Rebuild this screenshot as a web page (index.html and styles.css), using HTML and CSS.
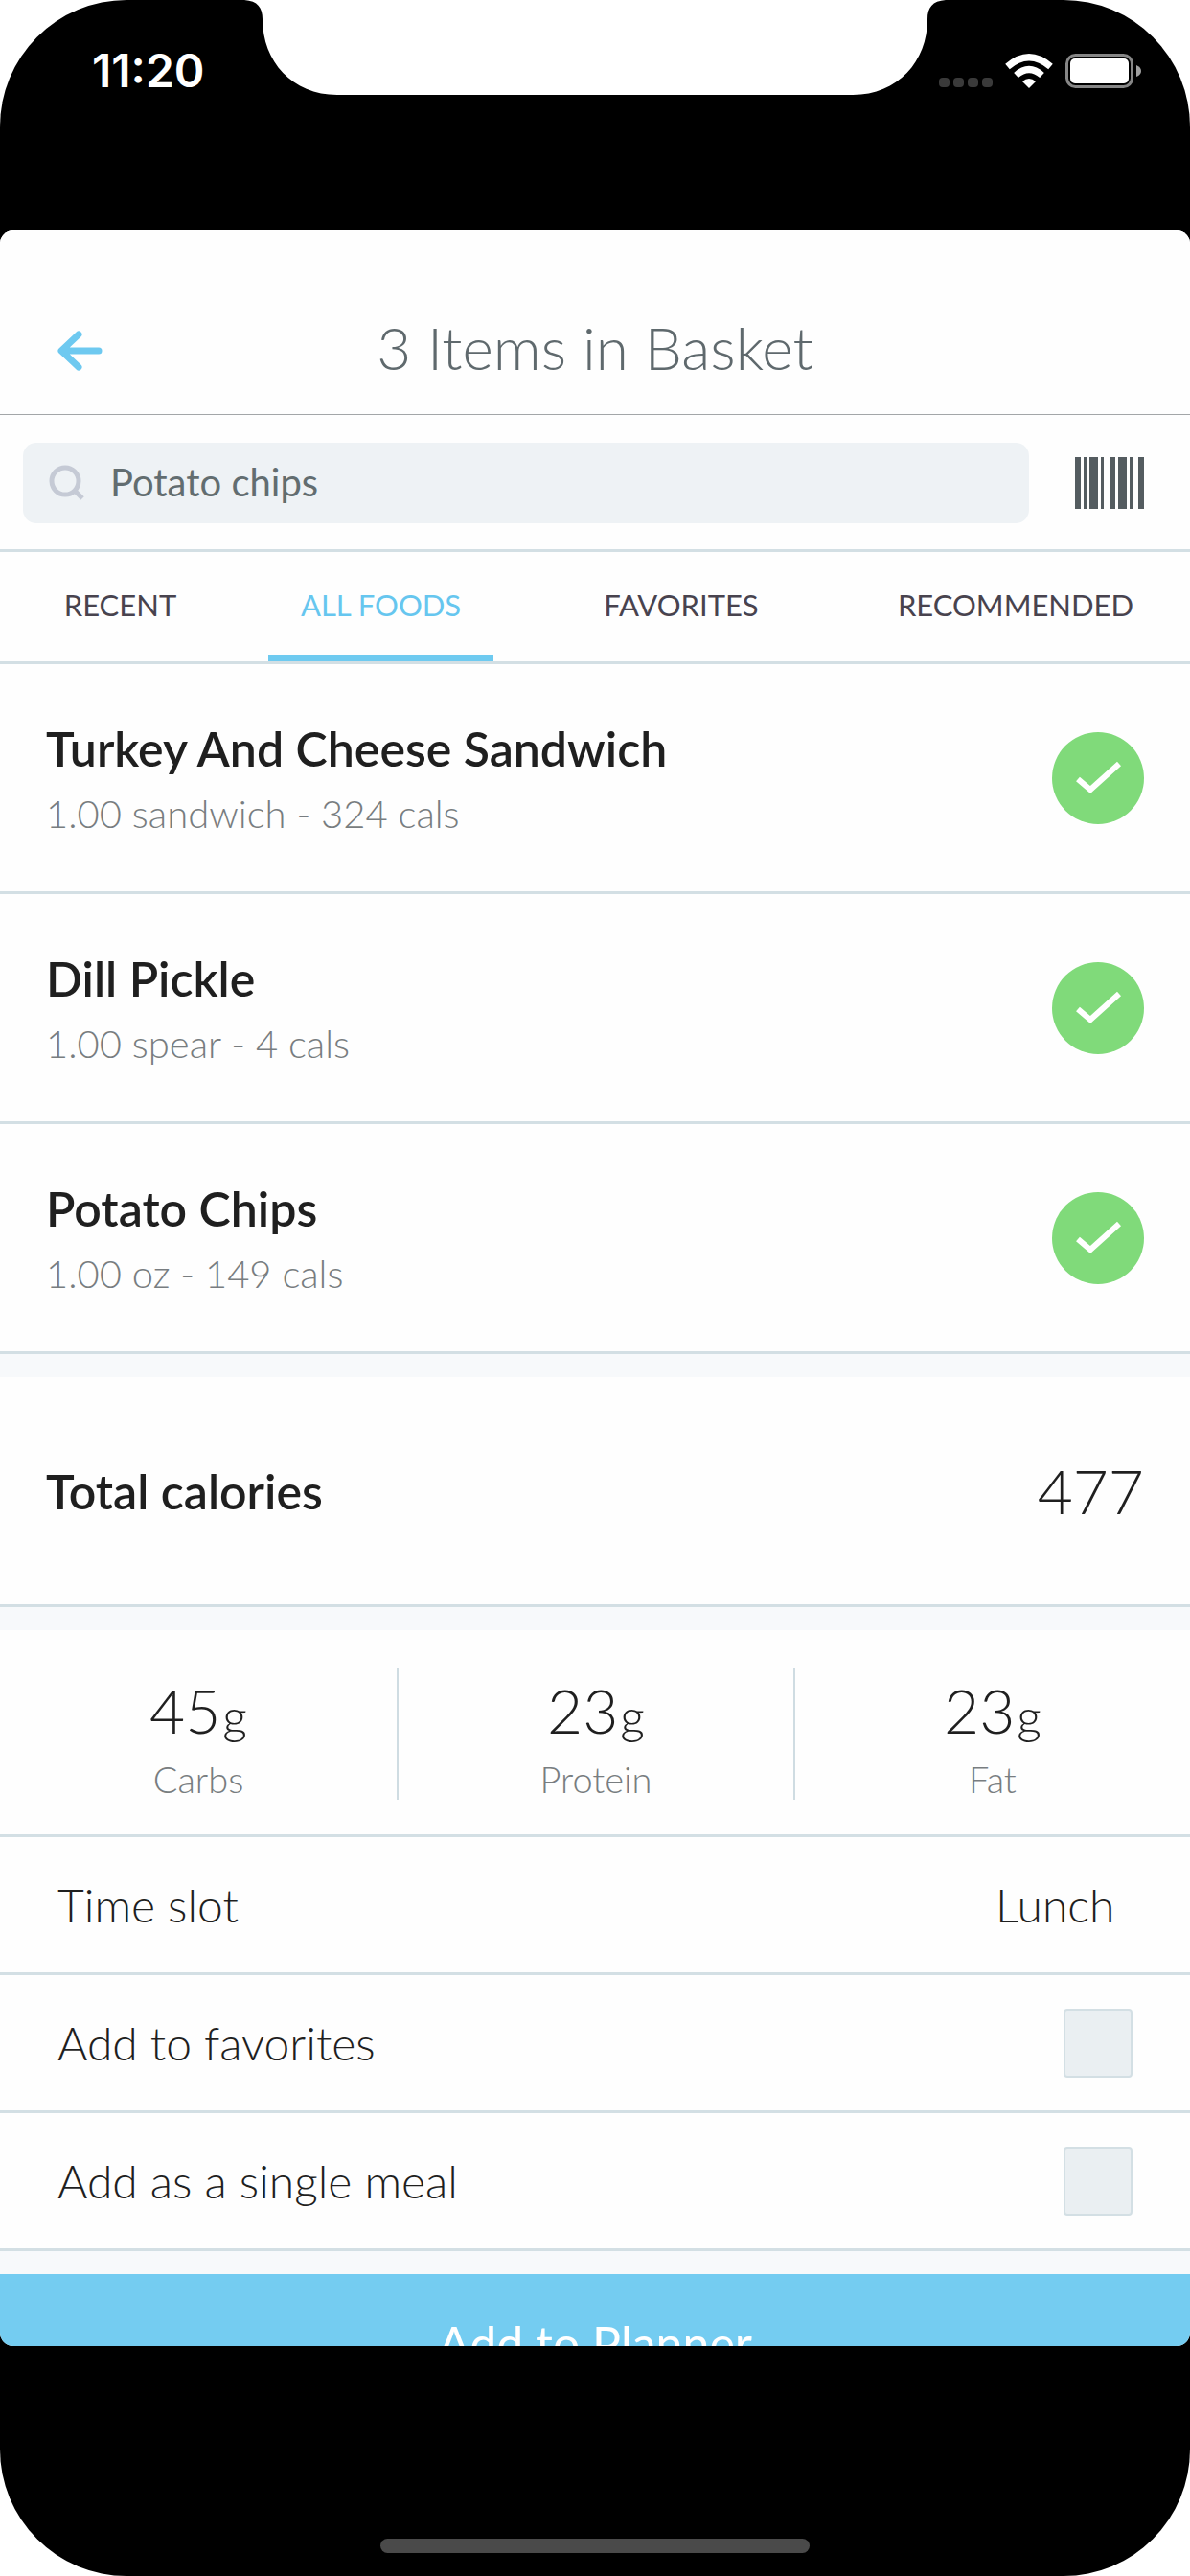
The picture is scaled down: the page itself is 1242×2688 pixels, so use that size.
FILE: index.html
```html
<!DOCTYPE html>
<html lang="en">
<head>
<meta charset="utf-8">
<meta name="viewport" content="width=device-width, initial-scale=1">
<title>3 Items in Basket</title>
<link rel="stylesheet" href="styles.css">
</head>
<body>
<div class="phone">
  <svg class="notch" width="732" height="99" viewBox="0 0 732 99" aria-hidden="true"><path d="M0 0C14 1 19 8 19 20C19 64 50 99 97 99H635C682 99 713 64 713 20C713 8 718 1 732 0Z" fill="#fff"/></svg>

  <div class="status-bar">
    <span class="clock">11:20</span>
    <div class="status-icons">
      <svg width="56" height="36" viewBox="0 0 56 36" aria-hidden="true" fill="#3a3a3a"><rect x="0" y="25" width="11" height="10" rx="4"/><rect x="15" y="25" width="11" height="10" rx="4"/><rect x="30" y="25" width="11" height="10" rx="4"/><rect x="45" y="25" width="11" height="10" rx="4"/></svg>
      <svg width="50" height="36" viewBox="0 0 50 36" aria-hidden="true"><path d="M25 36L18 29Q25 23 32 29Z" fill="#fff"/><path d="M11.500 22.500Q25 10.500 38.500 22.500M2.500 13.500Q25 -6 47.500 13.500" fill="none" stroke="#fff" stroke-width="7"/></svg>
      <svg width="80" height="36" viewBox="0 0 80 36" aria-hidden="true"><rect x="1.500" y="1.500" width="68" height="33" rx="9" fill="none" stroke="#868686" stroke-width="3"/><rect x="5" y="5" width="61" height="26" rx="5" fill="#fff"/><path d="M74 12Q79 14 79 18T74 24Z" fill="#a0a0a0"/></svg>
    </div>
  </div>

  <main class="sheet">
    <header class="header">
      <button class="back" type="button" aria-label="Back">
        <svg width="47" height="42" viewBox="0 0 47 42" aria-hidden="true"><path d="M43 21H6M22 4L4 21L22 38" fill="none" stroke="#6ec9f0" stroke-width="7" stroke-linecap="round" stroke-linejoin="round"/></svg>
      </button>
      <h1 class="title">3 Items in Basket</h1>
    </header>

    <form class="search">
      <label class="search-box">
        <svg width="38" height="38" viewBox="0 0 38 38" aria-hidden="true"><circle cx="17" cy="17" r="14" fill="none" stroke="#c5cad5" stroke-width="5"/><path d="M27 27L35 35" stroke="#c5cad5" stroke-width="5"/></svg>
        <input class="search-input" type="text" value="Potato chips" aria-label="Search foods">
      </label>
      <button class="scan" type="button" aria-label="Scan barcode">
        <svg width="72" height="54" viewBox="0 0 72 54" aria-hidden="true"><path d="M0 0h6v54H0zM9 0h3v54H9zM15 0h9v54h-9zM27 0h3v54h-3zM36 0h6v54h-6zM45 0h9v54h-9zM57 0h3v54h-3zM66 0h6v54h-6z" fill="#545c60"/></svg>
      </button>
    </form>

    <nav class="tabs">
      <button class="tab" type="button">RECENT</button>
      <button class="tab tab-active" type="button">ALL FOODS</button>
      <button class="tab" type="button">FAVORITES</button>
      <button class="tab" type="button">RECOMMENDED</button>
    </nav>

    <ul class="foods">
      <li class="food">
        <div class="food-info"><h2 class="name">Turkey And Cheese Sandwich</h2><p class="amount">1.00 sandwich - 324 cals</p></div>
        <button class="check" type="button" aria-label="Remove Turkey And Cheese Sandwich"><svg width="96" height="96" viewBox="0 0 96 96" aria-hidden="true"><path d="M27 49L40 60L70 33" fill="none" stroke="#fff" stroke-width="6"/></svg></button>
      </li>
      <li class="food">
        <div class="food-info"><h2 class="name">Dill Pickle</h2><p class="amount">1.00 spear - 4 cals</p></div>
        <button class="check" type="button" aria-label="Remove Dill Pickle"><svg width="96" height="96" viewBox="0 0 96 96" aria-hidden="true"><path d="M27 49L40 60L70 33" fill="none" stroke="#fff" stroke-width="6"/></svg></button>
      </li>
      <li class="food">
        <div class="food-info"><h2 class="name">Potato Chips</h2><p class="amount">1.00 oz - 149 cals</p></div>
        <button class="check" type="button" aria-label="Remove Potato Chips"><svg width="96" height="96" viewBox="0 0 96 96" aria-hidden="true"><path d="M27 49L40 60L70 33" fill="none" stroke="#fff" stroke-width="6"/></svg></button>
      </li>
    </ul>

    <section class="total">
      <h2 class="name">Total calories</h2>
      <span class="figure">477</span>
    </section>

    <section class="macros">
      <div class="macro"><span class="figure">45<small class="unit">g</small></span><span class="macro-name">Carbs</span></div>
      <div class="macro"><span class="figure">23<small class="unit">g</small></span><span class="macro-name">Protein</span></div>
      <div class="macro"><span class="figure">23<small class="unit">g</small></span><span class="macro-name">Fat</span></div>
    </section>

    <section class="options">
      <div class="option">
        <label for="slot">Time slot</label>
        <select class="slot" id="slot"><option>Lunch</option></select>
      </div>
      <div class="option">
        <label for="favorite">Add to favorites</label>
        <input class="box" type="checkbox" id="favorite">
      </div>
      <div class="option">
        <label for="single">Add as a single meal</label>
        <input class="box" type="checkbox" id="single">
      </div>
    </section>

    <button class="submit" type="button">Add to Planner</button>
  </main>

  <footer class="home"><div class="home-bar"></div></footer>
</div>
</body>
</html>
```

FILE: styles.css
```css
* {
  box-sizing: border-box;
  margin: 0;
  padding: 0;
}

body {
  background: #fff;
  color: #1f1f1f;
  font-family: Lato, "Open Sans", sans-serif;
}

svg {
  display: block;
}

button,
input,
select {
  font: inherit;
  color: inherit;
  border: 0;
  background: none;
  appearance: none;
}

.phone {
  position: relative;
  display: flex;
  flex-direction: column;
  height: 100vh;
  background: #000;
  border-radius: 132px;
  overflow: hidden;
}

.notch {
  position: absolute;
  top: 0;
  left: 50%;
  margin-left: -366px;
}

.status-bar {
  flex: none;
  display: flex;
  justify-content: space-between;
  align-items: flex-start;
  height: 240px;
  padding: 44px 50px 0 96px;
}

.clock {
  color: #fff;
  font-family: Inter, sans-serif;
  font-size: 48px;
  font-weight: 600;
  line-height: 60px;
}

.status-icons {
  display: flex;
  gap: 13px;
  padding-top: 12px;
}

.sheet {
  flex: 1;
  min-height: 0;
  display: flex;
  flex-direction: column;
  background: #f7f9fb;
  border-radius: 14px;
  overflow: hidden;
}

.sheet > * {
  flex: none;
  background: #fefefe;
}

.header {
  display: grid;
  grid-template-columns: 1fr auto 1fr;
  align-items: center;
  height: 193px;
  padding: 52px 60px 0;
  border-bottom: 1px solid #a3a6a8;
}

.back {
  width: 47px;
  padding-top: 8px;
}

.title {
  color: #5f696d;
  font-size: 62px;
  font-weight: 300;
  line-height: 72px;
}

.search {
  display: flex;
  align-items: center;
  gap: 48px;
  padding: 29px 48px 27px 24px;
  border-bottom: 3px solid #d3dfe4;
}

.search-box {
  flex: 1;
  display: flex;
  align-items: center;
  gap: 26px;
  height: 84px;
  padding: 0 27px;
  background: #eef2f5;
  border-radius: 14px;
}

.search-input {
  flex: 1;
  min-width: 0;
  padding-bottom: 2px;
  color: #626d70;
  font-size: 40px;
  line-height: 48px;
}

.tabs {
  display: grid;
  grid-template-columns: 251fr 293fr 334fr 364fr;
  justify-items: center;
  border-bottom: 3px solid #d3dfe4;
}

.tab {
  height: 114px;
  padding: 0 34px 4px;
  border: solid transparent;
  border-width: 6px 0;
  color: #48434e;
  font-size: 31px;
  line-height: 36px;
}

.tab-active {
  color: #66c6ef;
  border-bottom-color: #6ecaf0;
}

.foods {
  list-style: none;
}

.food,
.total {
  display: flex;
  align-items: center;
  justify-content: space-between;
  height: 240px;
  padding: 0 48px;
  border-bottom: 3px solid #d3dfe4;
}

.food-info {
  display: grid;
  gap: 14px;
}

.name {
  font-size: 50px;
  font-weight: 600;
  line-height: 60px;
}

.amount {
  color: #787d80;
  font-size: 40px;
  font-weight: 300;
  line-height: 48px;
}

.check {
  width: 96px;
  height: 96px;
  border-radius: 50%;
  background: #80da7a;
}

.total {
  margin-top: 24px;
}

.figure {
  font-size: 64px;
  font-weight: 300;
  line-height: 66px;
}

.unit {
  margin-left: 2px;
  font-size: 50px;
  line-height: 1;
}

.macros {
  display: grid;
  grid-template-columns: repeat(3, 1fr);
  height: 216px;
  margin-top: 24px;
  padding: 39px 0 36px;
  border-bottom: 3px solid #d3dfe4;
}

.macro {
  display: flex;
  flex-direction: column;
  align-items: center;
  gap: 16px;
  padding-top: 12px;
}

.macro + .macro {
  border-left: 2px solid #cfdce2;
}

.macro-name {
  color: #787d80;
  font-size: 38px;
  font-weight: 300;
  line-height: 44px;
}

.option {
  display: flex;
  align-items: center;
  justify-content: space-between;
  height: 144px;
  padding: 0 60px;
  border-bottom: 3px solid #d3dfe4;
  font-size: 48px;
  font-weight: 300;
  line-height: 60px;
}

.slot {
  padding: 0 18px;
}

.box {
  width: 72px;
  height: 72px;
  background: #eaeff2;
  border: 2px solid #d3dfe4;
  border-radius: 4px;
}

.sheet > .submit {
  height: 144px;
  margin-top: 24px;
  background: #74ccf1;
  color: #fff;
  font-size: 50px;
  line-height: 60px;
}

.home {
  flex: none;
  display: flex;
  justify-content: center;
  align-items: flex-end;
  height: 240px;
  padding-bottom: 24px;
}

.home-bar {
  width: 36%;
  height: 15px;
  border-radius: 8px;
  background: #4a4a4a;
}
```
